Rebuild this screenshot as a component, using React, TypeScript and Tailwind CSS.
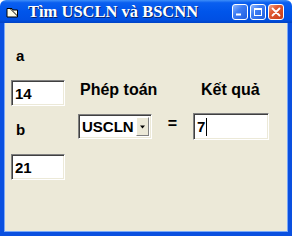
import React from 'react';

// Small XP-style caption button
const CaptionButton: React.FC<{ kind: 'min' | 'max' | 'close' }> = ({ kind }) => {
  const bg =
    kind === 'close'
      ? 'bg-[linear-gradient(135deg,#f0a58c_0%,#e05a33_35%,#c83c18_100%)]'
      : 'bg-[linear-gradient(135deg,#8fb8ff_0%,#3d7cf3_40%,#1f5ee0_100%)]';
  return (
    <div
      className={`w-[16px] h-[16px] rounded-[3px] border border-white flex items-center justify-center ${bg}`}
    >
      {kind === 'min' && (
        <svg width="14" height="14" viewBox="0 0 14 14">
          <rect x="3" y="8.5" width="5" height="2" fill="#fff" />
        </svg>
      )}
      {kind === 'max' && (
        <svg width="14" height="14" viewBox="0 0 14 14">
          <rect x="3.5" y="3.5" width="7" height="7" fill="none" stroke="#fff" strokeWidth="1" />
          <rect x="3" y="3" width="8" height="2" fill="#fff" />
        </svg>
      )}
      {kind === 'close' && (
        <svg width="14" height="14" viewBox="0 0 14 14">
          <path d="M3.5 3.5 L10.5 10.5 M10.5 3.5 L3.5 10.5" stroke="#fff" strokeWidth="1.8" strokeLinecap="round" />
        </svg>
      )}
    </div>
  );
};

// Sunken white edit box
const EditBox: React.FC<{ value: string; width: string; height: string; caret?: boolean }> = ({
  value,
  width,
  height,
  caret,
}) => (
  <div
    className={`${width} ${height} bg-white border border-t-[#808080] border-l-[#808080] border-b-white border-r-white shadow-[inset_1px_1px_0_#404040,inset_-1px_-1px_0_#ece9d8] flex items-center pl-[3px] text-[15px] leading-[17px] font-bold text-black`}
  >
    <span>{value}</span>
    {caret && <span className="ml-[1px] w-[1px] h-[18px] bg-black" />}
  </div>
);

const ComboBox: React.FC<{ value: string }> = ({ value }) => (
  <div className="w-[74px] h-[25px] bg-white border border-t-[#808080] border-l-[#808080] border-b-white border-r-white shadow-[inset_1px_1px_0_#404040,inset_-1px_-1px_0_#ece9d8] flex items-stretch p-[2px]">
    <span className="flex-1 flex items-center pl-[1px] text-[15px] leading-[17px] font-bold text-black">
      {value}
    </span>
    <div className="w-[13px] bg-[#ece9d8] border border-t-white border-l-white border-b-[#808080] border-r-[#808080] flex items-center justify-center">
      <svg width="7" height="4" viewBox="0 0 7 4">
        <path d="M1 0.5 L6 0.5 L3.5 3.5 Z" fill="#000" />
      </svg>
    </div>
  </div>
);

export default function App() {
  return (
    <div className="w-[292px] h-[236px] bg-white flex flex-col font-['Liberation_Sans',Arial,sans-serif]">
      {/* Title bar */}
      <div className="h-[23px] rounded-t-[6px] bg-[linear-gradient(to_bottom,#3e8ef8_0%,#0a5ff0_12%,#0055ea_50%,#0050e4_85%,#0042c4_100%)] flex items-center pl-[6px] pr-[8px]">
        <svg width="13" height="11" viewBox="0 0 13 11" className="mt-[2px]">
          <path d="M1 1.5 L6 1.5 L7 3 L11.5 3 L11.5 10 L1 10 Z" fill="#fffce8" stroke="#000" strokeWidth="1" />
          <path d="M1 1.5 L4 1.5 L11.5 9" fill="none" stroke="#000" strokeWidth="1" />
        </svg>
        <span className="ml-[9px] text-white font-bold text-[16.5px] leading-[18px] font-['Liberation_Serif','Times_New_Roman',serif] [text-shadow:1px_1px_0_#0a246a]">
          Tìm USCLN và BSCNN
        </span>
        <div className="ml-auto flex gap-[2px]">
          <CaptionButton kind="min" />
          <CaptionButton kind="max" />
          <CaptionButton kind="close" />
        </div>
      </div>

      {/* Client area */}
      <div className="flex-1 bg-[#ece9d8] border-x-4 border-b-4 border-[#0a50e0] shadow-[inset_1px_0_0_#7aa8f8,inset_-1px_0_0_#7aa8f8,inset_0_-1px_0_#7aa8f8] flex text-black font-bold">
        {/* Column a / b */}
        <div className="ml-[7px] flex flex-col">
          <span className="mt-[24px] ml-[5px] text-[15px] leading-[17px]">a</span>
          <div className="mt-[16px]">
            <EditBox value="14" width="w-[54px]" height="h-[26px]" />
          </div>
          <span className="mt-[15px] ml-[5px] text-[15px] leading-[17px]">b</span>
          <div className="mt-[16px]">
            <EditBox value="21" width="w-[54px]" height="h-[26px]" />
          </div>
        </div>

        {/* Operation and result */}
        <div className="ml-[13px] flex flex-col">
          <div className="mt-[58px] flex text-[16px] leading-[18px]">
            <span className="w-[123px] pl-[2px]">Phép toán</span>
            <span>Kết quả</span>
          </div>
          <div className="mt-[14px] flex items-center">
            <ComboBox value="USCLN" />
            <span className="w-[41px] text-center text-[16px] leading-[18px] mb-[6px]">=</span>
            <EditBox value="7" width="w-[76px]" height="h-[27px]" caret />
          </div>
        </div>
      </div>
    </div>
  );
}
